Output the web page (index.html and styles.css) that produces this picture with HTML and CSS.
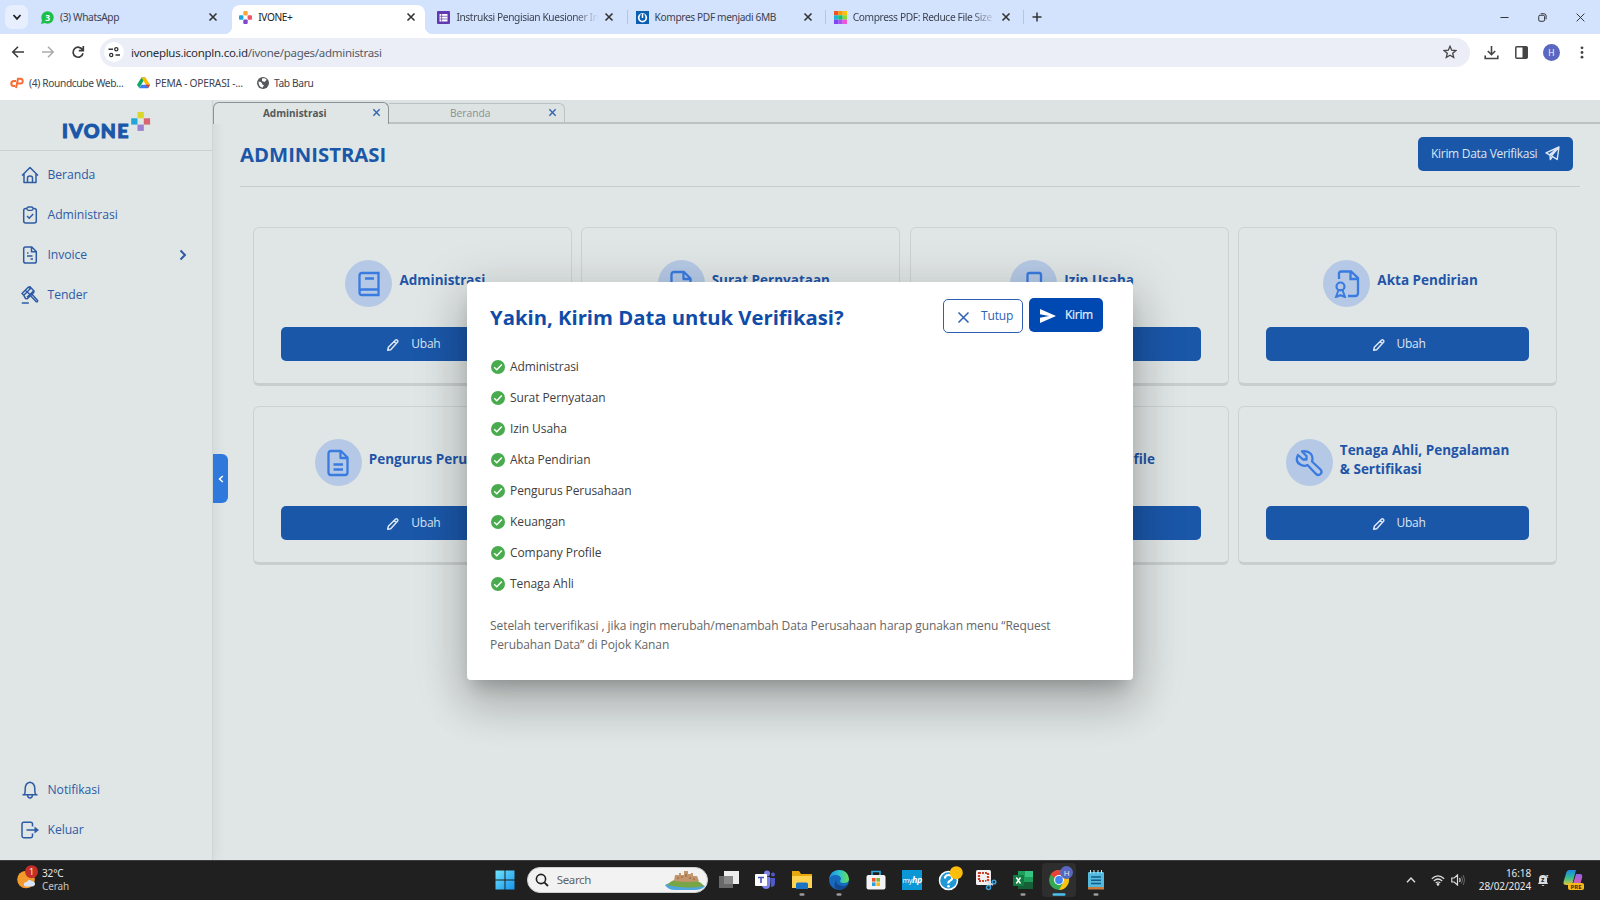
FILE: index.html
```html
<!DOCTYPE html>
<html lang="id">
<head>
<meta charset="utf-8">
<title>IVONE+</title>
<link rel="stylesheet" href="styles.css">
</head>
<body>
<svg class="defs" width="0" height="0">
  <symbol id="x" viewBox="0 0 10 10"><path d="M1.5 1.5l7 7M8.500 1.500l-7 7" fill="none" stroke="currentColor" stroke-width="1.600"/></symbol>
  <symbol id="pencil" viewBox="0 0 24 24"><path d="M3 21l1-5L16.500 3.500q1.500-1 3 .5t.5 3L8 20zM14 6l4 4" fill="none" stroke="currentColor" stroke-width="2.600" stroke-linejoin="round"/></symbol>
  <symbol id="check" viewBox="0 0 14 14"><circle cx="7" cy="7" r="7" fill="#49ab4e"/><path d="M3.200 7.200l2.600 2.600 5-5.200" fill="none" stroke="#fff" stroke-width="1.500"/></symbol>
  <symbol id="doc" viewBox="0 0 24 28"><path d="M15 2H5Q2.500 2 2.500 4.500v19Q2.500 26 5 26h14q2.500 0 2.500-2.500V8.500zM14.500 2v7h7M7.500 15.500h9.500M7.500 20.500h9.500" fill="none" stroke="currentColor" stroke-width="2.300" stroke-linejoin="round"/></symbol>
</svg>

<header class="tabstrip">
  <div class="tab-search"><svg width="10" height="10" viewBox="0 0 10 10"><path d="M1.500 3l3.500 3.800L8.500 3" fill="none" stroke="#222" stroke-width="1.800"/></svg></div>
  <div class="tab">
    <svg class="fav" viewBox="0 0 13 13"><circle cx="6.500" cy="6.500" r="6.200" fill="#1dbf4c"/><path d="M0 13l1-4 3 3z" fill="#1dbf4c"/><text x="6.500" y="9.600" text-anchor="middle" class="wa">3</text></svg>
    <span class="t">(3) WhatsApp</span><svg class="close"><use href="#x"/></svg>
  </div>
  <div class="tab active">
    <svg class="fav" viewBox="0 0 13 13"><rect x="4.300" y="0" width="4.400" height="4.400" rx="1" fill="#f9a63a"/><rect x="0" y="4.300" width="4.400" height="4.400" rx="1" fill="#1ba5dc"/><rect x="8.600" y="4.300" width="4.400" height="4.400" rx="1" fill="#ee5366"/><rect x="4.300" y="8.600" width="4.400" height="4.400" rx="1" fill="#8146cf"/></svg>
    <span class="t">IVONE+</span><svg class="close"><use href="#x"/></svg>
  </div>
  <div class="tab">
    <svg class="fav" viewBox="0 0 13 13"><rect width="13" height="13" rx="1" fill="#6238b0"/><path d="M2.500 3h8v7.500h-8z" fill="#fff"/><path d="M2.500 5.300h8M2.500 8h8M4.600 3v7.500" stroke="#6238b0" stroke-width=".7"/></svg>
    <span class="t fade">Instruksi Pengisian Kuesioner In</span><svg class="close"><use href="#x"/></svg>
  </div>
  <div class="tab sep">
    <svg class="fav" viewBox="0 0 13 13"><rect width="13" height="13" fill="#0b5fb0"/><circle cx="6.500" cy="6.800" r="3.800" fill="none" stroke="#fff" stroke-width="1.700"/><path d="M6.500 3v4" stroke="#0b5fb0" stroke-width="4"/><path d="M6.500 2.500v4.500" stroke="#fff" stroke-width="1.500"/></svg>
    <span class="t">Kompres PDF menjadi 6MB</span><svg class="close"><use href="#x"/></svg>
  </div>
  <div class="tab sep">
    <svg class="fav" viewBox="0 0 12 12"><path fill="#f4511e" d="M0 0h4v4H0z"/><path fill="#ff9800" d="M4 0h4v4H4z"/><path fill="#ffc107" d="M8 0h4v4H8z"/><path fill="#1fb5d8" d="M0 4h4v4H0z"/><path fill="#0ec46a" d="M4 4h4v4H4z"/><path fill="#8bd835" d="M8 4h4v4H8z"/><path fill="#7a47f2" d="M0 8h4v4H0z"/><path fill="#b04cf2" d="M4 8h4v4H4z"/><path fill="#ee55d8" d="M8 8h4v4H8z"/></svg>
    <span class="t fade">Compress PDF: Reduce File Size</span><svg class="close"><use href="#x"/></svg>
  </div>
  <div class="newtab sep"><svg width="10" height="10" viewBox="0 0 10 10"><path d="M5 .5v9M.5 5h9" stroke="#333" stroke-width="1.500"/></svg></div>
  <div class="winctl">
    <svg viewBox="0 0 10 10"><path d="M.5 5h9" stroke="#222" stroke-width="1"/></svg>
    <svg viewBox="0 0 10 10"><rect x=".8" y="2.500" width="6.500" height="6.700" rx="1.500" fill="none" stroke="#222"/><path d="M3 .8h3.500Q9 .8 9 3.300V7" fill="none" stroke="#222"/></svg>
    <svg viewBox="0 0 10 10"><path d="M.7.7l8.600 8.600M9.300.7L.7 9.300" stroke="#222"/></svg>
  </div>
</header>

<div class="toolbar">
  <svg class="tb" viewBox="0 0 14 14"><path d="M13 7H2M7 1.800L1.800 7 7 12.200" fill="none" stroke="#3c3c3c" stroke-width="1.600"/></svg>
  <svg class="tb" viewBox="0 0 14 14"><path d="M1 7h11M7 1.800L12.200 7 7 12.200" fill="none" stroke="#aaa" stroke-width="1.500"/></svg>
  <svg class="tb" viewBox="0 0 14 14"><path d="M11.600 5A5 5 0 1 0 12 8.300M12.300 1v4.700H7.800" fill="none" stroke="#3c3c3c" stroke-width="1.700"/></svg>
  <div class="omnibox">
    <span class="site"><svg width="12" height="12" viewBox="0 0 12 12"><path d="M.5 3.200H5M7.500 9H12" stroke="#333" stroke-width="1.600"/><circle cx="8.300" cy="3.200" r="1.600" fill="none" stroke="#333" stroke-width="1.300"/><circle cx="3.200" cy="9" r="1.600" fill="none" stroke="#333" stroke-width="1.300"/></svg></span>
    <span class="url"><b>ivoneplus.iconpln.co.id</b>/ivone/pages/administrasi</span>
    <svg class="star" viewBox="0 0 14 14"><path d="M7 1.300l1.700 3.900 4.200.3-3.200 2.800 1 4.200L7 10.300l-3.700 2.200 1-4.200L1.100 5.500l4.200-.3z" fill="none" stroke="#444" stroke-width="1.300"/></svg>
  </div>
  <div class="tbright">
    <svg width="15" height="15" viewBox="0 0 15 15"><path d="M7.500 1v8.500M3.800 6l3.700 3.700L11.200 6M1.200 10.500v3h12.600v-3" fill="none" stroke="#444" stroke-width="1.600"/></svg>
    <svg width="13" height="13" viewBox="0 0 13 13"><rect x=".8" y=".8" width="11.400" height="11.400" rx="1" fill="none" stroke="#444" stroke-width="1.500"/><path d="M7.500 1h5v11h-5z" fill="#444"/></svg>
    <span class="avatar">H</span>
    <svg width="4" height="13" viewBox="0 0 4 13"><g fill="#444"><circle cx="2" cy="1.800" r="1.400"/><circle cx="2" cy="6.500" r="1.400"/><circle cx="2" cy="11.200" r="1.400"/></g></svg>
  </div>
</div>

<div class="bookmarks">
  <svg width="14" height="12" viewBox="0 0 14 12"><path d="M6 4H4Q1.300 4 1.300 6.500T4 9h1M6 11L8 1.800h2.200q2.500 0 2.500 2.400t-2.500 2.300H8" fill="none" stroke="#fa6b33" stroke-width="2"/></svg>
  <span class="bm b1">(4) Roundcube Web...</span>
  <svg width="13" height="12" viewBox="0 0 13 12"><path d="M4.500.5h4L4.300 7.500 2.200 11 0 7.800z" fill="#0da960"/><path d="M4.500.5h4L13 7.800H8.800z" fill="#ffba00"/><path d="M4.300 7.800H13L11 11.300H2.200z" fill="#3b7df0"/><path d="M8.800 7.800H13L11 11.300z" fill="#e43e2b"/></svg>
  <span class="bm b2">PEMA - OPERASI -...</span>
  <svg width="12" height="12" viewBox="0 0 12 12"><circle cx="6" cy="6" r="6" fill="#55585c"/><path d="M1.500 4.500q3 .2 3.500 2t2 1.500l-1.500 2.700Q1.500 10 1.500 4.500zM5 1.500q3-.8 4.700 1.200L7.500 5 5 4z" fill="#fff"/></svg>
  <span class="bm b3">Tab Baru</span>
</div>

<div class="app">
  <aside class="sidebar">
    <div class="logo"><span class="word">IVONE</span>
      <svg width="20" height="19" viewBox="0 0 20 19"><path fill="#dcd72c" d="M6.500 0h6.300v6.300H6.500z"/><path fill="#23a5d8" d="M.2 6.300h6.300v6.300H.2z"/><path fill="#d96570" d="M12.800 6.300h6.300v6.300h-6.300z"/><path fill="#9a80d0" d="M6.500 12.600h6.300v6.300H6.500z"/></svg>
    </div>
    <nav>
      <a><svg viewBox="0 0 18 18"><path d="M1 9.500L9 1.500l8 8M3 8v8.500h12V8M6.500 16v-4q0-2 2.500-2t2.500 2v4" fill="none" stroke="currentColor" stroke-width="1.500" stroke-linejoin="round"/></svg>Beranda</a>
      <a><svg viewBox="0 0 18 18"><rect x="2.700" y="2.500" width="12.600" height="14.500" rx="2" fill="none" stroke="currentColor" stroke-width="1.500"/><rect x="6" y="1" width="6" height="3.300" rx="1.500" fill="#e0e6e5" stroke="currentColor" stroke-width="1.300"/><path d="M6 10l2.200 2.200L12.200 8" fill="none" stroke="currentColor" stroke-width="1.500"/></svg>Administrasi</a>
      <a><svg viewBox="0 0 18 18"><path d="M10.800 1H4.500Q2.700 1 2.700 2.800v12.400Q2.700 17 4.500 17h9q1.800 0 1.800-1.800V5.500zM10.500 1v4.800h4.800M6 7h1.500M6 10h5.500M9.500 13h2.500" fill="none" stroke="currentColor" stroke-width="1.500" stroke-linejoin="round"/></svg>Invoice
        <svg class="chev" viewBox="0 0 10 12"><path d="M2.500 1.500L7 6l-4.500 4.500" fill="none" stroke="currentColor" stroke-width="2"/></svg></a>
      <a><svg viewBox="0 0 18 18"><path d="M1 7.500L7.500 1l1.800 1.800-6.500 6.500zM7.500 1L9 .8l4 4.200-.3 1.500-6.400 6.300-1.700-.2-1.800-3.300M12.500 5L6 11.300M4.300 4.200l6 5.600M9.500 9.800l5.800 5.900q1.500.5 1.300-1.300L11 8.300M.8 17h7" fill="none" stroke="currentColor" stroke-width="1.500" stroke-linejoin="round"/></svg>Tender</a>
    </nav>
    <nav class="bottom">
      <a><svg viewBox="0 0 18 18"><path d="M1.500 13.700h15M3.200 13.500q1-1.500 1-4V7.500Q4.500 2 9 1.300q4.500.7 4.800 6.200v2q0 2.500 1 4M6.500 14q.3 3 2.500 3t2.500-3" fill="none" stroke="currentColor" stroke-width="1.500" stroke-linejoin="round"/></svg>Notifikasi</a>
      <a><svg viewBox="0 0 18 18"><path d="M11.500 5.500V3q0-1.700-1.700-1.700H2.700Q1 1.300 1 3v12q0 1.700 1.700 1.700h7.100q1.700 0 1.700-1.700v-2.500M5.500 9H15" fill="none" stroke="currentColor" stroke-width="1.500"/><path d="M13.500 5.500L18 9l-4.500 3.500z" fill="currentColor"/></svg>Keluar</a>
    </nav>
  </aside>
  <main>
    <div class="apptabs">
      <div class="apptab on"><span>Administrasi</span><svg><use href="#x"/></svg></div>
      <div class="apptab"><span>Beranda</span><svg><use href="#x"/></svg></div>
    </div>
    <div class="head"><h1>ADMINISTRASI</h1>
      <button class="verify">Kirim Data Verifikasi<svg width="15" height="15" viewBox="0 0 15 15"><path d="M14 1L1 6.800l3.500 2L14 1zL5 9l.3 4.500 2-2.700M14 1l-1.800 12.500-5.700-3.700z" fill="none" stroke="currentColor" stroke-width="1.400" stroke-linejoin="round"/></svg></button>
    </div>
    <div class="grid">
      <section class="card"><div class="ch"><i><svg width="24" height="26" viewBox="0 0 24 26"><path d="M21.500 2H5Q2.500 2 2.500 4.500v17Q2.500 24 5 24h16.500zM2.500 20.500q.5-2 2.500-2h16.500M8 7.500h9" fill="none" stroke="currentColor" stroke-width="2.300"/></svg></i><h2>Administrasi</h2></div><button class="edit"><svg><use href="#pencil"/></svg>Ubah</button></section>
      <section class="card"><div class="ch"><i><svg width="24" height="28"><use href="#doc"/></svg></i><h2>Surat Pernyataan</h2></div><button class="edit"><svg><use href="#pencil"/></svg>Ubah</button></section>
      <section class="card"><div class="ch"><i><svg width="24" height="26" viewBox="0 0 24 26"><rect x="5.500" y="2" width="13.500" height="22" rx="2" fill="none" stroke="currentColor" stroke-width="2.300"/></svg></i><h2>Izin Usaha</h2></div><button class="edit"><svg><use href="#pencil"/></svg>Ubah</button></section>
      <section class="card"><div class="ch"><i><svg width="28" height="28" viewBox="0 0 28 28"><path d="M6 9V3.500Q6 1.500 8 1.500h10l7 6.500v15q0 3-3 3h-7M17.500 1.500V9H25" fill="none" stroke="currentColor" stroke-width="2.300"/><circle cx="7.500" cy="16.500" r="4" fill="none" stroke="currentColor" stroke-width="2.200"/><path d="M5.500 20L3 27l4.500-1.800L12 27l-2.500-7z" fill="none" stroke="currentColor" stroke-width="2"/></svg></i><h2>Akta Pendirian</h2></div><button class="edit"><svg><use href="#pencil"/></svg>Ubah</button></section>
      <section class="card"><div class="ch"><i><svg width="24" height="28"><use href="#doc"/></svg></i><h2>Pengurus Perusahaan</h2></div><button class="edit"><svg><use href="#pencil"/></svg>Ubah</button></section>
      <section class="card"><div class="ch"><i><svg width="24" height="28"><use href="#doc"/></svg></i><h2>Keuangan</h2></div><button class="edit"><svg><use href="#pencil"/></svg>Ubah</button></section>
      <section class="card"><div class="ch"><i><svg width="24" height="28"><use href="#doc"/></svg></i><h2>Company Profile</h2></div><button class="edit"><svg><use href="#pencil"/></svg>Ubah</button></section>
      <section class="card"><div class="ch wide"><i><svg width="28" height="28" viewBox="0 0 28 28"><path d="M7 2.500l4.500 4.500v3.500H8L3 6Q0 12 4.500 15t8 1l8.500 9q2.500 2 4.500 0t0-4.500L17 12.500q1.500-5-1.500-8T7 2.500z" fill="none" stroke="currentColor" stroke-width="2.300" stroke-linejoin="round"/></svg></i><h2>Tenaga Ahli, Pengalaman<br>&amp; Sertifikasi</h2></div><button class="edit"><svg><use href="#pencil"/></svg>Ubah</button></section>
    </div>
  </main>
  <div class="handle"><svg width="6" height="8" viewBox="0 0 6 8"><path d="M4.800 1L1.500 4l3.300 3" fill="none" stroke="#fff" stroke-width="1.500"/></svg></div>
  <div class="modal">
    <div class="mh"><h3>Yakin, Kirim Data untuk Verifikasi?</h3>
      <button class="no"><svg width="13" height="13" viewBox="0 0 13 13"><path d="M1.500 1.500l10 10M11.500 1.500l-10 10" stroke="currentColor" stroke-width="1.500"/></svg>Tutup</button>
      <button class="yes"><svg width="16" height="14" viewBox="0 0 16 14"><path d="M0 0l16 7L0 14V8.700L9 7 0 5.300z" fill="#fff"/></svg>Kirim</button>
    </div>
    <ul>
      <li><svg><use href="#check"/></svg>Administrasi</li>
      <li><svg><use href="#check"/></svg>Surat Pernyataan</li>
      <li><svg><use href="#check"/></svg>Izin Usaha</li>
      <li><svg><use href="#check"/></svg>Akta Pendirian</li>
      <li><svg><use href="#check"/></svg>Pengurus Perusahaan</li>
      <li><svg><use href="#check"/></svg>Keuangan</li>
      <li><svg><use href="#check"/></svg>Company Profile</li>
      <li><svg><use href="#check"/></svg>Tenaga Ahli</li>
    </ul>
    <p>Setelah terverifikasi , jika ingin merubah/menambah Data Perusahaan harap gunakan menu “Request<br>Perubahan Data” di Pojok Kanan</p>
  </div>
</div>

<footer class="taskbar">
  <div class="weather">
    <svg width="22" height="25" viewBox="0 0 22 25"><circle cx="9" cy="14.500" r="8.800" fill="#f39a2b"/><path d="M9 21.500q-3-.5-2-3 1-1.700 2.700-1.300 1.800-3.500 5-1.200 3.800.5 3.300 3.500-.5 2-3 2z" fill="#d7e3f7"/><circle cx="14.500" cy="6.700" r="6.500" fill="#c62f28"/><text x="14.500" y="10.300" text-anchor="middle" class="wn">1</text></svg>
    <div>32°C<br><span>Cerah</span></div>
  </div>
  <div class="apps">
    <svg class="ic" viewBox="0 0 20 20"><defs><linearGradient id="w" x2="1" y2="1"><stop stop-color="#6fe4fb"/><stop offset="1" stop-color="#1593ee"/></linearGradient></defs><path d="M.5.500h9v9h-9zM10.500.500h9v9h-9zM.5 10.500h9v9h-9zM10.500 10.500h9v9h-9z" fill="url(#w)"/></svg>
    <div class="search"><svg width="14" height="14" viewBox="0 0 14 14"><circle cx="6" cy="6" r="4.600" fill="none" stroke="#222" stroke-width="1.600"/><path d="M9.300 9.300l3.700 3.700" stroke="#222" stroke-width="1.800"/></svg><span>Search</span>
      <svg class="castle" width="40" height="20" viewBox="0 0 40 20"><path d="M0 15q4-3 20-2t20 3q-3 4-10 4H10q-7 0-10-5z" fill="#4fa6dc"/><path d="M2 15Q8 8 20 8t19 8q-9 2-18 1.500T2 15z" fill="#78a545"/><path d="M9 11l1-6h4V3h2v2h3V1h4v3h3V3h2v3h4l2 5q-12 2-25 0z" fill="#c4946a"/><path d="M13 7v2M17 6v2M21 4v3M25 7v2M29 8v2" stroke="#8d6142"/></svg></div>
    <svg class="ic" viewBox="0 0 20 20"><rect x="5" y="1" width="15" height="13" fill="#eee"/><rect x="0" y="6" width="14" height="12" fill="#777" opacity=".85"/></svg>
    <svg class="ic" viewBox="0 0 20 20"><circle cx="12" cy="3.500" r="3" fill="#7b83eb"/><circle cx="18" cy="4.500" r="2" fill="#5059c9"/><path d="M8 7h7v8q0 4-4 4-3 0-4-3z" fill="#7b83eb"/><path d="M15 8h5v5q0 4-4 4z" fill="#5059c9"/><rect y="4" width="12" height="12" rx="1" fill="#fff"/><path d="M3 7.500h6M6 7.500V13" stroke="#464eb8" stroke-width="1.600"/></svg>
    <svg class="ic" viewBox="0 0 20 20"><path d="M0 1h7l2 3h11v14H0z" fill="#e8a90e"/><path d="M0 6h20v12H0z" fill="#ffd352"/><path d="M4 19v-5q0-1.500 1.500-1.500h9q1.500 0 1.500 1.500v5z" fill="#1974c5"/><rect class="run" x="7.500" y="23.300" width="5" height="2.400" rx="1.200"/></svg>
    <svg class="ic" viewBox="0 0 20 20"><defs><linearGradient id="e" x2="1"><stop stop-color="#1b8be0"/><stop offset=".5" stop-color="#2dc3d0"/><stop offset="1" stop-color="#6bdd52"/></linearGradient></defs><circle cx="10" cy="10" r="10" fill="#1769bd"/><path d="M0 10Q1 0 10 0t10 9q0 4-5 4-4 0-4-2 1-1 1-2.500Q11 5 7 5q-6 0-7 5z" fill="url(#e)"/><path d="M8 9q-3 7 8 7l3-2q-3 6-9 6Q2 18 8 9z" fill="#124a92"/><rect class="run" x="7.500" y="23.300" width="5" height="2.400" rx="1.200"/></svg>
    <svg class="ic" viewBox="0 0 20 20"><path d="M6 6V1.500h8V6" fill="none" stroke="#2ea8e0" stroke-width="1.700"/><rect x=".5" y="5" width="19" height="14.500" rx="2" fill="#f3f3f3"/><path fill="#f0532d" d="M6 8h3.600v3.600H6z"/><path fill="#7db72f" d="M10.400 8H14v3.600h-3.600z"/><path fill="#2b9fe0" d="M6 12.400h3.600V16H6z"/><path fill="#f7b718" d="M10.400 12.400H14V16h-3.600z"/></svg>
    <div class="hp">my<b>hp</b></div>
    <svg class="ic" viewBox="0 0 20 20"><circle cx="9.500" cy="10.500" r="9" fill="#1e98d7" stroke="#fff" stroke-width="1.500"/><path d="M6 8.500q0-3.500 3.700-3.500t3.500 3q0 2-2 2.800T9.500 13.500" fill="none" stroke="#fff" stroke-width="2.200"/><circle cx="9.500" cy="16.200" r="1.300" fill="#fff"/><circle cx="17.300" cy="2.700" r="6.500" fill="#fdbd0c"/></svg>
    <svg class="ic" viewBox="0 0 20 20"><rect width="15" height="15" rx="1.500" fill="#f1f1f1"/><path d="M3 3h9v8H3z" fill="none" stroke="#c9422b" stroke-width="2.200" stroke-dasharray="2 1"/><path d="M10 11l7 4M14 9v7" stroke="#ddd" stroke-width="1.500"/><circle cx="12.500" cy="17.500" r="2" fill="none" stroke="#3fa2dc" stroke-width="1.500"/><circle cx="18" cy="12" r="1.800" fill="none" stroke="#3fa2dc" stroke-width="1.500"/></svg>
    <svg class="ic" viewBox="0 0 20 20"><path d="M5 1h15v18H5z" fill="#1f9d5b"/><path d="M12 1h8v6h-8z" fill="#35c481"/><path d="M5 12h15v7H5z" fill="#175f37"/><rect y="5" width="11" height="11" rx="1" fill="#107c41"/><path d="M3.300 7.500l4.200 6M7.500 7.500l-4.200 6" stroke="#fff" stroke-width="1.500"/><rect class="run" x="7.500" y="23.300" width="5" height="2.400" rx="1.200"/></svg>
    <div class="chrome"><svg class="ic" viewBox="0 0 20 20"><circle cx="10" cy="10" r="10" fill="#34a853"/><path d="M10 10L1.300 5Q4.500 0 10 0t8.700 5z" fill="#ea4335"/><path d="M10 5h8.700q3 5.500-.5 10.500-3 4.500-8.200 4.500l5-9z" fill="#fbc116"/><circle cx="10" cy="10" r="5" fill="#fff"/><circle cx="10" cy="10" r="3.900" fill="#4285f4"/><rect x="3.500" y="23.200" width="13" height="2.600" rx="1.300" fill="#4cc2f0"/></svg><em>H</em></div>
    <svg class="ic" viewBox="0 0 20 20"><rect x="2" y="2" width="16" height="17" rx="1" fill="#53b9de"/><path d="M2 17h16v2.500H2z" fill="#c97a3c"/><path d="M5 7h10M5 10.300h10M5 13.500h10" stroke="#125e86" stroke-width="1.500"/><path d="M4.500 0v3.500M8 0v3.500M12 0v3.500M15.500 0v3.500" stroke="#c7ecf8"/><rect class="run" x="7.500" y="23.300" width="5" height="2.400" rx="1.200"/></svg>
  </div>
  <div class="tray">
    <svg width="10" height="8" viewBox="0 0 10 8"><path d="M1 6.300L5 2l4 4.300" fill="none" stroke="#ddd" stroke-width="1.400"/></svg>
    <svg class="wifi" width="14" height="12" viewBox="0 0 14 12"><path d="M.8 4.800q6.200-6 12.400 0M2.800 7q4.200-4 8.400 0M4.700 9q2.300-2 4.600 0" fill="none" stroke="#ddd" stroke-width="1.200"/><circle cx="7" cy="10.400" r="1.300" fill="#ddd"/></svg>
    <svg class="vol" width="14" height="12" viewBox="0 0 14 12"><path d="M.8 4h2.400L6.500 1v10L3.200 8H.8zM8.500 4q1.200 2 0 4" fill="none" stroke="#ddd" stroke-width="1.200"/><path d="M10.500 2.500q2 3.500 0 7M12.300 1q2.500 5 0 10" fill="none" stroke="#666"/></svg>
    <div class="clock">16:18<br>28/02/2024</div>
    <svg class="bell" width="13" height="14" viewBox="0 0 13 14"><path d="M1 11l1-2V6q0-4 4-4t4 4v3l1 2zM4.500 12h3q-1.500 2-3 0z" fill="#ddd"/><text x="4" y="9" class="zz">z</text><text x="8.500" y="5" class="zw">z</text></svg>
    <svg width="21" height="20" viewBox="0 0 21 20"><defs><linearGradient id="c" y2="1" x2="0"><stop stop-color="#1b86e8"/><stop offset=".5" stop-color="#32bd94"/><stop offset="1" stop-color="#e0c43a"/></linearGradient><linearGradient id="d" y2="1" x2="0"><stop stop-color="#9660e8"/><stop offset="1" stop-color="#f05ca0"/></linearGradient></defs><path d="M6 0h7L9 15H3Q0 15 .5 12L3.500 2Q4 .5 6 0z" fill="url(#c)"/><path d="M13 4h4q3 0 2 4l-2 7q-.5 2-3 2H9z" fill="url(#d)"/><rect x="5" y="13" width="16" height="7" rx="2" fill="#f8b91c"/><text x="13" y="18.800" text-anchor="middle" class="pre">PRE</text></svg>
  </div>
</footer>
</body>
</html>
```
FILE: styles.css
```css
* { box-sizing: border-box; }
body { margin: 0; width: 1600px; height: 900px; overflow: hidden; display: flex; flex-direction: column; font-family: "Open Sans", sans-serif; background: #fff; }
svg { flex: none; display: block; }
.defs { position: absolute; }
button { font-family: inherit; border: 0; }

/* browser tab strip */
.tabstrip { height: 34px; flex: none; display: flex; background: #d3e2fd; font-family: "Noto Sans", sans-serif; font-size: 10.200px; letter-spacing: -.38px; color: #3c4350; }
.tab-search { width: 23px; height: 24px; margin: 5px 6px 0 5px; border-radius: 7px; background: #e7effe; display: flex; align-items: center; justify-content: center; }
.tab { width: 198.200px; height: 34px; display: flex; align-items: center; padding-left: 7px; position: relative; }
.fav { width: 13px; height: 13px; margin-right: 6px; }
.wa { font: bold 8.500px "Open Sans"; fill: #fff; }
.tab .t { width: 143px; white-space: nowrap; line-height: 18px; }
.fade { -webkit-mask-image: linear-gradient(90deg, #000 118px, transparent 143px); mask-image: linear-gradient(90deg, #000 118px, transparent 143px); }
.close { width: 10px; height: 10px; margin-left: 5px; color: #333; }
.active { z-index: 0; color: #222; }
.active::before { content: ""; position: absolute; z-index: -1; left: 0; top: 5px; width: 193px; height: 29px; background: #fff; border-radius: 8px 8px 0 0; }
.active::after { content: ""; position: absolute; z-index: -1; left: -8px; bottom: 0; width: 209px; height: 8px; background: radial-gradient(circle at 0 0, transparent 8px, #fff 8.500px) left / 8px 8px no-repeat, radial-gradient(circle at 100% 0, transparent 8px, #fff 8.500px) right / 8px 8px no-repeat; }
.sep::before { content: ""; position: absolute; left: -2px; top: 10px; width: 1.500px; height: 14px; background: #a9c8f8; }
.newtab { position: relative; width: 26px; padding: 12px 0 0 7px; }
.winctl { margin-left: auto; display: flex; align-items: center; gap: 29px; padding-right: 15px; }
.winctl svg { width: 9px; height: 9px; }

/* toolbar */
.toolbar { height: 35px; flex: none; display: flex; align-items: center; padding-left: 11px; }
.tb { width: 14px; height: 14px; margin-right: 16px; }
.omnibox { width: 1370px; height: 29px; margin: 1px 0 0 -1px; border-radius: 15px; background: #ebeef7; display: flex; align-items: center; padding: 0 13px 0 4px; }
.site { width: 20px; height: 20px; border-radius: 50%; background: #fff; display: flex; align-items: center; justify-content: center; margin-right: 7px; }
.url { flex: 1; font-family: "Noto Sans", sans-serif; font-size: 11.500px; letter-spacing: -.29px; color: #555b66; }
.url b { font-weight: 400; color: #2b2f36; }
.star { width: 14px; height: 14px; }
.tbright { flex: 1; display: flex; align-items: center; padding: 1px 0 0 14px; gap: 16px; }
.tbright .avatar { width: 17px; height: 17px; margin: 0 4px 0 -1px; border-radius: 50%; background: #5a67c0; color: #fff; font-size: 8.500px; line-height: 17px; text-align: center; }
.bookmarks { height: 31px; flex: none; display: flex; align-items: center; padding: 0 0 3px 10px; font-family: "Noto Sans", sans-serif; font-size: 10.200px; letter-spacing: -.35px; color: #3c4350; }
.bm { padding-left: 5px; white-space: nowrap; }
.b1 { width: 113px; }
.b2 { width: 107px; letter-spacing: -.22px; }

/* application */
.app { height: 760px; flex: none; display: flex; position: relative; background: #e0e6e5; overflow: hidden; }
.sidebar { width: 213px; display: flex; flex-direction: column; box-shadow: 0 0 14px rgba(0,0,0,.09); border-right: 1px solid #d0d6d6; color: #2d5ba5; }
.logo { height: 51px; border-bottom: 1px solid #cad0d0; display: flex; padding: 12px 0 0 62px; }
.word { width: 69px; font: 900 19.500px/37px Lato, sans-serif; color: #1b57a9; letter-spacing: 1.300px; -webkit-text-stroke: 1.100px #1b57a9; }
nav { padding-top: 4px; }
nav a { height: 40px; display: flex; align-items: center; font-size: 12.200px; letter-spacing: -.06px; padding: 0 0 1px 21px; }
nav a svg { width: 18px; height: 18px; margin: 1px 8.500px 0 0; }
nav a .chev { width: 10px; height: 12px; margin: 0 24px 0 auto; }
.bottom { margin-top: auto; padding-bottom: 10px; }
main { flex: 1; }
.apptabs { height: 23.500px; display: flex; padding-top: 2px; border-bottom: 2px solid #bcc2c2; background: #dde3e3; }
.apptab { width: 176px; height: 20px; margin-top: 1px; border: 1px solid #bcc2c2; border-bottom: 0; border-left: 0; border-radius: 0 6px 0 0; display: flex; align-items: center; font-size: 10.300px; color: #8b8f90; }
.apptab.on { height: 22px; margin-top: 0; border: 1px solid #8d9293; border-bottom: 0; border-radius: 6px 6px 0 0; background: #e0e6e5; font-weight: 700; font-size: 10px; color: #54585a; }
.apptab span { flex: 1; text-align: center; padding: 0 0 1px 4px; }
.apptab svg { width: 9px; height: 9px; margin: 0 7.500px 2px 0; color: #3567b3; }
.head { height: 63.500px; margin: 0 20px 0 27px; border-bottom: 1px solid #c8cece; display: flex; justify-content: space-between; }
h1 { margin: 15.500px 0 0; font-size: 20.300px; line-height: 30px; font-weight: 700; color: #1b57a9; }
.verify { width: 155px; height: 34px; margin: 13px 7px 0 0; padding: 0 0 0 13px; border-radius: 5px; background: #1b57a9; color: #dce6f4; font-size: 12px; letter-spacing: -.3px; display: flex; align-items: center; gap: 8px; white-space: nowrap; }
.grid { margin: 40px 43px 0 40px; display: grid; grid-template-columns: repeat(4, 1fr); column-gap: 9.600px; row-gap: 20px; }
.card { height: 159px; border: 1px solid #ccd2d2; border-bottom: 3px solid #c8cdcd; border-radius: 6px; padding: 32px 27px 0; }
.ch { height: 47px; display: flex; justify-content: center; padding-left: 6px; align-items: center; }
.ch.wide { padding: 0; }
.ch i { width: 47px; height: 47px; flex: none; border-radius: 50%; background: #b5c9e6; color: #3a7be0; display: flex; align-items: center; justify-content: center; }
h2 { margin: 0 0 6px 7px; font-size: 13.500px; line-height: 18.500px; font-weight: 700; color: #1f55a8; white-space: nowrap; }
.edit { width: 100%; height: 34px; margin-top: 20px; padding: 0 0 2px 2px; border-radius: 5px; background: #1b57a9; color: #dce6f4; font-size: 12px; letter-spacing: -.25px; display: flex; align-items: center; justify-content: center; }
.edit svg { width: 14px; height: 14px; margin: 3px 11px 0 0; }
.handle { position: absolute; left: 213px; top: 354px; width: 15px; height: 49px; border-radius: 0 6px 6px 0; background: #2f78dc; display: flex; align-items: center; justify-content: center; }

/* dialog */
.modal { position: absolute; left: 467px; top: 182px; width: 666px; height: 398px; padding: 16px 23px; border-radius: 4px; background: #fff; box-shadow: 0 12px 16px -7px rgba(0,0,0,.2), 0 26px 42px 3px rgba(0,0,0,.14), 0 10px 50px 9px rgba(0,0,0,.12); }
.mh { height: 36px; display: flex; }
h3 { margin: 4px 0 0; width: 453px; font-size: 20.280px; line-height: 30px; color: #0f4ca8; white-space: nowrap; }
.mh button { height: 34px; border-radius: 5px; display: flex; align-items: center; font-size: 12px; letter-spacing: -.15px; padding: 0 0 2px; }
.no { width: 80px; margin: 1px 6px 0 0; border: 1px solid #2d5fb4 !important; background: #fff; color: #2d5fb4; }
.no svg { margin: 4px 11px 0 13px; }
.mh .yes { width: 74px; letter-spacing: -.3px; background: #0048b2; color: #e6eefa; -webkit-text-stroke: .2px #e6eefa; }
.yes svg { margin: 3px 9px 0 11px; }
ul { list-style: none; margin: 17px 0 0; padding: 0; }
li { height: 31px; display: flex; align-items: center; font-size: 12px; letter-spacing: -.08px; color: #404040; }
li svg { width: 14px; height: 14px; margin: 1px 5px 0 1px; }
.modal p { margin: 18px 0 0; font-size: 12px; letter-spacing: -.07px; line-height: 18.500px; color: #666; white-space: nowrap; }

/* taskbar */
.taskbar { height: 40px; flex: none; background: #202020; border-top: 1px solid #3c3d3d; display: flex; position: relative; color: #e8e8e8; font-family: "Noto Sans", sans-serif; font-size: 10px; line-height: 13px; }
.weather { width: 493px; display: flex; gap: 3px; padding: 4px 0 0 17px; }
.weather div { padding-top: 2px; letter-spacing: -.15px; }
.weather span { color: #c4c4c4; }
.wn { font: 9px "Open Sans"; fill: #fff; }
.apps { display: flex; align-items: center; gap: 16.750px; padding: 0 0 1px 2px; }
.ic { width: 20px; height: 20px; overflow: visible; }
.run { fill: #9a9a9a; }
.search { width: 181px; height: 26px; margin: 0 -6px 0 -5px; border-radius: 13px; background: #f2f2f2; border: 1px solid #cfcfcf; display: flex; align-items: center; padding: 0 0 1px 7px; font-size: 11.500px; letter-spacing: -.35px; color: #626262; }
.search span { flex: 1; padding-left: 8px; }
.castle { margin-right: 2px; }
.hp { width: 20px; height: 20px; background: #0b96d6; color: #fff; font-size: 7px; line-height: 20px; text-align: center; letter-spacing: -.3px; }
.hp b { font-size: 9px; font-style: italic; }
.chrome { width: 34px; height: 34px; margin: 0 -7px; border-radius: 4px; background: #2e2e2e; position: relative; display: flex; align-items: center; justify-content: center; }
.chrome em { position: absolute; left: 18px; top: 3px; width: 13px; height: 13px; border-radius: 50%; background: #5a67c0; font: 8px/13px "Open Sans"; text-align: center; }
.tray { margin-left: auto; display: flex; align-items: center; padding: 0 16px 1px 0; }
.wifi { margin-left: 15px; }
.vol { margin-left: 6px; }
.clock { width: 66px; text-align: right; letter-spacing: -.1px; }
.bell { margin: 0 13px 0 6px; }
.zz { font: bold 7px "Open Sans"; fill: #222; }
.zw { font: bold 6px "Open Sans"; fill: #ddd; }
.pre { font: bold 6px "Open Sans"; fill: #3a2a00; }
```
